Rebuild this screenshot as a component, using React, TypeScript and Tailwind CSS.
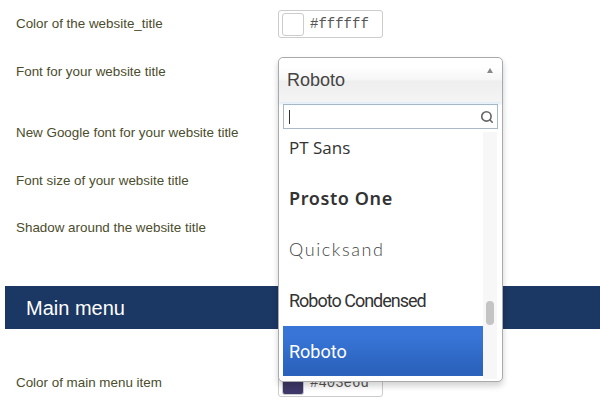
import { Search } from "lucide-react";

const label = "font-['Liberation_Sans',Arial,sans-serif] text-[13.4px] text-[#4b4d2c]";

function ColorInput({ swatch, value }: { swatch: string; value: string }) {
  return (
    <div className="flex h-[28px] w-[105px] items-center gap-[6px] rounded-[3px] border border-[#ccc] bg-white pl-[3px]">
      <div
        className="h-[23px] w-[22px] rounded-[3px] border border-[#ccc]"
        style={{ background: swatch }}
      />
      <span className="font-['Liberation_Mono',monospace] text-[14px] text-[#555]">{value}</span>
    </div>
  );
}

function Row({ text, className, children }: { text: string; className: string; children?: React.ReactNode }) {
  return (
    <div className={`flex items-center ${className}`}>
      <span className={`${label} w-[278px] shrink-0 pl-4`}>{text}</span>
      {children}
    </div>
  );
}

function FontDropdown() {
  return (
    <div className="absolute left-[278px] top-[57px] flex h-[325px] w-[225px] flex-col rounded-[5px] border border-[#aaa] bg-white shadow-[0_4px_6px_rgba(0,0,0,0.18)]">
      <div className="relative flex h-[44px] items-center rounded-t-[5px] bg-[linear-gradient(#fff_20%,#f6f6f6_50%,#eee_52%,#f4f4f4_100%)] pl-[8px] shadow-[0_2px_3px_rgba(120,170,220,0.25)]">
        <span className="font-['Liberation_Sans',Arial,sans-serif] text-[18px] text-[#444]">Roboto</span>
        <span className="absolute right-[9px] top-[10px] h-0 w-0 border-x-[3.5px] border-b-[5px] border-x-transparent border-b-[#888]" />
      </div>
      <div className="mx-[4px] mt-[2px] flex h-[25px] items-center justify-between border border-[#a9b9c9] bg-white pl-[5px] pr-[3px]">
        <span className="h-[14px] w-px bg-[#333]" />
        <Search size={14} strokeWidth={2.8} className="text-[#666]" />
      </div>
      <div className="ml-[4px] mr-[5px] mt-[3px] flex h-[247px] overflow-hidden">
        <div className="w-[200px] overflow-hidden">
          <div className="-mt-[10px] flex flex-col">
            <div className="flex h-[51px] items-center pl-[6px] font-['Open_Sans',sans-serif] text-[17px] text-[#333]">PT Sans</div>
            <div className="flex h-[51px] items-center pl-[6px] font-['Noto_Sans',sans-serif] text-[18px] font-semibold tracking-[0.6px] text-[#333]">Prosto One</div>
            <div className="flex h-[51px] items-center pl-[6px] font-['Lato',sans-serif] text-[18px] font-light tracking-[1.6px] text-[#444]">Quicksand</div>
            <div className="flex h-[51px] items-center pl-[6px] font-['Roboto',sans-serif] text-[18px] tracking-[-1px] text-[#333]">Roboto Condensed</div>
            <div className="flex h-[50px] items-center bg-[linear-gradient(#3875d7_20%,#2a62bc_90%)] pl-[6px] font-['Roboto',sans-serif] text-[18px] text-white">Roboto</div>
          </div>
        </div>
        <div className="relative w-[14px] bg-[#f7f7f7]">
          <div className="absolute left-[3px] top-[169px] h-[24px] w-[8px] rounded-full bg-[#c4c4c4]" />
        </div>
      </div>
    </div>
  );
}

export default function App() {
  return (
    <div className="relative h-[415px] w-[600px] overflow-hidden bg-white">
      <Row text="Color of the website_title" className="h-[48px]">
        <ColorInput swatch="#ffffff" value="#ffffff" />
      </Row>
      <Row text="Font for your website title" className="h-[48px]" />
      <Row text="New Google font for your website title" className="mt-[12px] h-[50px]" />
      <Row text="Font size of your website title" className="h-[46px]" />
      <Row text="Shadow around the website title" className="h-[48px]" />
      <div className="ml-[5px] mt-[34px] flex h-[43px] items-center bg-[#1b3764] pl-[21px]">
        <span className="font-['Liberation_Sans',Arial,sans-serif] text-[20px] text-white">Main menu</span>
      </div>
      <Row text="Color of main menu item" className="mt-[30px] h-[48px]">
        <ColorInput swatch="#3d3868" value="#403e6d" />
      </Row>
      <FontDropdown />
    </div>
  );
}
